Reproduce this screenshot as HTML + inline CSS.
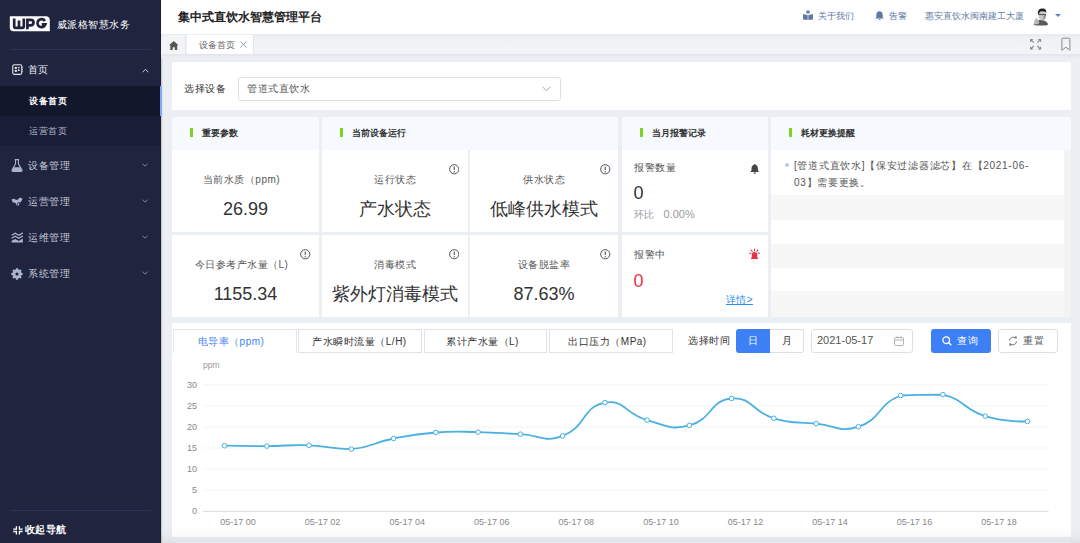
<!DOCTYPE html>
<html><head><meta charset="utf-8">
<style>
*{box-sizing:border-box;margin:0;padding:0}
html,body{width:1080px;height:543px;overflow:hidden}
body{position:relative;background:#ebeff4;font-family:"Liberation Sans",sans-serif;color:#333}
.a{position:absolute;white-space:nowrap}
#side{position:absolute;left:0;top:0;width:160px;height:543px;background:#20243f}
#side .t{position:absolute;white-space:nowrap;color:#c3c7d6;font-size:10px;line-height:12px;letter-spacing:0.5px}
#side .chev{position:absolute;left:142px;width:6px;height:6px;border-right:1px solid #8a90a8;border-bottom:1px solid #8a90a8;transform:rotate(45deg)}
#hdr{position:absolute;left:161px;top:0;width:919px;height:34px;background:#fff}
#tabs{position:absolute;left:161px;top:34px;width:919px;height:20px;background:linear-gradient(to bottom,#e8ebef,#eff1f4 25%,#f3f4f7)}
.card{position:absolute;background:#fff}
.ch{position:absolute;background:#f6f9fd}
.bar{position:absolute;width:3px;height:9px;background:#7ed321}
.ht{position:absolute;font-size:9px;line-height:10px;font-weight:bold;color:#333;white-space:nowrap}
.lbl{position:absolute;font-size:10px;line-height:11px;color:#555;white-space:nowrap;text-align:center;letter-spacing:0.5px}
.big{position:absolute;font-size:18px;line-height:20px;color:#333;white-space:nowrap;text-align:center}
.info{position:absolute;width:10.5px;height:10.5px}

</style></head><body>

<!-- SIDEBAR -->
<div id="side">
  <svg class="a" style="left:9px;top:15px" width="42" height="18" viewBox="0 0 42 18">
    <path d="M1.2 1.2 H36.8 Q40.8 1.2 40.8 5.2 V16.3 H4.5 Q0.8 16.3 0.8 12.6 V1.6 Z" fill="#fff"/>
    <g fill="none" stroke="#1f2340" stroke-width="2.7">
      <path d="M5.2 3.4 V11.3 Q5.2 12.8 6.7 12.8 H13.3 Q14.8 12.8 14.8 11.3 V3.4 M10 5.6 V12.8"/>
      <path d="M18.4 14.2 V4.8 H21.6 Q24.5 4.8 24.5 7.6 Q24.5 10.4 21.6 10.4 H18.4"/>
      <path d="M36 6 A4.05 4.05 0 1 0 36.4 9.4 H32.8"/>
    </g>
  </svg>
  <div class="t" style="left:57px;top:19px;font-size:10px;line-height:11px;color:#fff;letter-spacing:0.45px">威派格智慧水务</div>
  <div class="a" style="left:10px;top:49px;width:141px;height:1px;background:#2e3250"></div>

  <svg class="a" style="left:11.5px;top:64px" width="12" height="12" viewBox="0 0 12 12"><rect x="0.75" y="0.75" width="9" height="9.6" rx="1.6" fill="none" stroke="#e6e8ee" stroke-width="1.1"/><rect x="2.7" y="2.9" width="2.2" height="2" fill="#e6e8ee"/><rect x="2.7" y="5.9" width="2.2" height="2" fill="#e6e8ee"/><path d="M5.8 3.4h2M5.8 6.4h2M6.6 4.5v2.5" stroke="#e6e8ee" stroke-width="0.9"/><path d="M9.9 3.3h0.9M9.9 5.4h0.9M9.9 7.5h0.9" stroke="#e6e8ee" stroke-width="0.8"/></svg>
  <div class="t" style="left:28px;top:64px;font-size:10px;line-height:11px;color:#eceef3;letter-spacing:0.4px">首页</div>
  <svg class="a" style="left:141.5px;top:67.5px" width="7" height="5" viewBox="0 0 7 5"><path d="M0.6 4.3L3.5 1.2l2.9 3.1" fill="none" stroke="#c4c8d4" stroke-width="1"/></svg>

  <div class="a" style="left:0;top:86px;width:160px;height:60px;background:#1a1d36"></div>
  <div class="a" style="left:0;top:86px;width:160px;height:30px;background:#13172b"></div>
  <div class="t" style="left:29px;top:96px;font-size:9px;line-height:10px;color:#fff;font-weight:bold">设备首页</div>
  <div class="t" style="left:29px;top:126px;font-size:9px;line-height:10px;color:#b3b8c9">运营首页</div>

  <svg class="a" style="left:11px;top:159px" width="12" height="13" viewBox="0 0 12 13"><path d="M3.8 0.6h4.2M4.5 0.6v4.3L1 11q-0.4 1.4 1 1.4h8q1.4 0 1-1.4L7.4 4.9V0.6" fill="none" stroke="#a9b3cb" stroke-width="1.1"/><path d="M2.6 8.2h6.8l1.3 3.3q0 0.6-0.6 0.6H1.9q-0.6 0-0.6-0.6z" fill="#a9b3cb"/></svg>
  <div class="t" style="left:28px;top:160px;font-size:10px;line-height:11px;letter-spacing:0.5px">设备管理</div>
  <svg class="a" style="left:142px;top:163px" width="6" height="4" viewBox="0 0 6 4"><path d="M0.5 0.6L3 3.2 5.5 0.6" fill="none" stroke="#8a90a8" stroke-width="0.9"/></svg>

  <svg class="a" style="left:11px;top:196px" width="12" height="11" viewBox="0 0 12 11"><path d="M0.6 3.6Q2.5 2.2 4.3 3.4L6 4.1 9.2 1.6 11.6 2.8 10.2 5.5 8.6 7.2 7.4 10.6 5.4 9.2 4.6 7.1 1.6 6.2z" fill="#a9b3cb"/><circle cx="8.2" cy="8.5" r="1.9" fill="none" stroke="#20243f" stroke-width="0.9"/></svg>
  <div class="t" style="left:28px;top:196px;font-size:10px;line-height:11px;letter-spacing:0.5px">运营管理</div>
  <svg class="a" style="left:142px;top:199px" width="6" height="4" viewBox="0 0 6 4"><path d="M0.5 0.6L3 3.2 5.5 0.6" fill="none" stroke="#8a90a8" stroke-width="0.9"/></svg>

  <svg class="a" style="left:11px;top:232px" width="13" height="11" viewBox="0 0 13 11"><path d="M0.6 3.2L4.2 1.3 7.8 3.3 11.8 0.9M0.6 6.2L4.2 4.3 7.8 6.3 11.8 3.9" fill="none" stroke="#a9b3cb" stroke-width="1.3"/><path d="M0.6 8.8L4.2 6.9 7.8 8.9 11.8 6.5V10.6H0.6z" fill="#a9b3cb"/></svg>
  <div class="t" style="left:28px;top:232px;font-size:10px;line-height:11px;letter-spacing:0.5px">运维管理</div>
  <svg class="a" style="left:142px;top:235px" width="6" height="4" viewBox="0 0 6 4"><path d="M0.5 0.6L3 3.2 5.5 0.6" fill="none" stroke="#8a90a8" stroke-width="0.9"/></svg>

  <svg class="a" style="left:11px;top:268px" width="12" height="12" viewBox="0 0 12 12"><circle cx="6" cy="6" r="3.5" fill="none" stroke="#a9b3cb" stroke-width="2.4"/><path d="M6 0.3v11.4M0.3 6h11.4M2 2l8 8M10 2l-8 8" stroke="#a9b3cb" stroke-width="2.1"/><circle cx="6" cy="6" r="1.6" fill="#20243f"/></svg>
  <div class="t" style="left:28px;top:268px;font-size:10px;line-height:11px;letter-spacing:0.5px">系统管理</div>
  <svg class="a" style="left:142px;top:271px" width="6" height="4" viewBox="0 0 6 4"><path d="M0.5 0.6L3 3.2 5.5 0.6" fill="none" stroke="#8a90a8" stroke-width="0.9"/></svg>

  <div class="a" style="left:10px;top:510px;width:141px;height:1px;background:#2e3250"></div>
  <svg class="a" style="left:12.5px;top:526px" width="10" height="9" viewBox="0 0 10 9"><path d="M0.2 3.1H3.4V0.2M9.6 3.1H6.4V0.2M0.2 5.5H3.4V8.6M9.6 5.5H6.4V8.6" fill="none" stroke="#fff" stroke-width="1.3"/></svg>
  <div class="t" style="left:25px;top:524px;font-size:10px;line-height:11px;color:#fff;font-weight:bold;letter-spacing:0.4px">收起导航</div>
</div>
<div class="a" style="left:160px;top:0;width:1px;height:543px;background:#1b1e33"></div>
<div class="a" style="left:161px;top:0;width:2px;height:543px;background:linear-gradient(to right,rgba(0,0,0,.18),rgba(0,0,0,0))"></div>
<div class="a" style="left:160.3px;top:86px;width:1.7px;height:30px;background:#7fa9f2"></div>

<!-- HEADER -->
<div id="hdr"></div>
<div class="a" style="left:178px;top:9.5px;font-size:12px;line-height:14px;font-weight:bold;color:#222">集中式直饮水智慧管理平台</div>

<div id="tabs"></div><div class="a" style="left:161px;top:54px;width:919px;height:4px;background:linear-gradient(to bottom,#e2e6eb,#ebeff4)"></div>

<!-- header right -->
<svg class="a" style="left:803px;top:10px" width="10" height="10" viewBox="0 0 10 10"><circle cx="5" cy="2" r="1.8" fill="#5e79a6"/><path d="M0 4l5 1.2L10 4v5.5L5 10 0 9.5z" fill="#5e79a6"/><path d="M5 5.2V10" stroke="#fff" stroke-width="0.6"/></svg>
<div class="a" style="left:818px;top:10.5px;font-size:9px;line-height:10px;color:#5e79a6">关于我们</div>
<svg class="a" style="left:874.5px;top:10.5px" width="9" height="9.5" viewBox="0 0 9 9.5"><path d="M4.5 0.3q3 0 3.2 3.5V6.3L8.7 7.6H0.3L1.3 6.3V3.8Q1.5 0.3 4.5 0.3z" fill="#5e79a6"/><path d="M3.3 8.3h2.4q-0.3 1.2-1.2 1.2t-1.2-1.2z" fill="#5e79a6"/></svg>
<div class="a" style="left:888.5px;top:10.5px;font-size:9px;line-height:10px;color:#5e79a6">告警</div>
<div class="a" style="left:924.5px;top:10.5px;font-size:9px;line-height:10px;color:#5e79a6">惠安直饮水闽南建工大厦</div>
<svg class="a" style="left:1033px;top:7px" width="17" height="19" viewBox="0 0 17 19">
 <path d="M0.5 17.5Q2 14 5 13.5L8 12.5 11 13.5Q14.5 14.5 15.3 17.5L13 18.6H3z" fill="#5a5a5a"/>
 <path d="M1.5 13.5L3.5 10.5 5 13 6.5 16 4 17.5 0.8 17z" fill="#b9b9b9"/>
 <path d="M5.2 7Q5.2 3 9.3 3Q13.3 3 13 7.5L12.3 11Q11 13.6 9 13.6Q6.8 13.6 5.8 11z" fill="#c9c9c9"/>
 <path d="M11 8L13 7.5 12.3 11Q11.4 12.8 10.2 13.3z" fill="#8a8a8a"/>
 <path d="M4.8 6.6Q4.6 1.4 9.6 1.4Q14 1.6 13.2 6.2L12.6 4.8Q10.2 3.6 7 4.6L5.6 7.4z" fill="#1e1e1e"/>
 <path d="M5.6 7.6H13" stroke="#3a3a3a" stroke-width="0.9"/>
</svg>
<div class="a" style="left:1055px;top:13.5px;width:0;height:0;border-left:3.2px solid transparent;border-right:3.2px solid transparent;border-top:3.8px solid #6482bb"></div>

<!-- tab bar -->
<div class="a" style="left:163px;top:35px;width:23px;height:19px;background:#f3f4f6;border-right:1px solid #e3e6ea"></div>
<svg class="a" style="left:169px;top:40.5px" width="9.5" height="9" viewBox="0 0 9.5 9"><path d="M4.75 0L9.5 4.2H8.2V9H5.8V6.2H3.7V9H1.3V4.2H0z" fill="#555"/></svg>
<div class="a" style="left:187px;top:35px;width:67px;height:19px;background:#fff;border-right:1px solid #e3e6ea"></div>
<div class="a" style="left:199px;top:39.5px;font-size:9px;line-height:10px;color:#666">设备首页</div>
<svg class="a" style="left:240px;top:41px" width="7" height="7" viewBox="0 0 7 7"><path d="M0.5 0.5l6 6M6.5 0.5l-6 6" stroke="#8a96a8" stroke-width="0.9"/></svg>
<svg class="a" style="left:1029px;top:38px" width="13" height="13" viewBox="0 0 13 13">
 <g stroke="#8c8c8c" stroke-width="1.1" fill="none"><path d="M1.8 1.7L4.8 4.7M11.4 1.7L8.4 4.7M1.8 11L4.8 8M11.4 11L8.4 8"/></g>
 <g fill="#8c8c8c"><path d="M1.1 1.1H4.4L1.1 4.4z"/><path d="M12.1 1.1H8.8L12.1 4.4z"/><path d="M1.1 11.6H4.4L1.1 8.3z"/><path d="M12.1 11.6H8.8L12.1 8.3z"/></g>
</svg>
<svg class="a" style="left:1060px;top:37px" width="12" height="15" viewBox="0 0 12 15"><path d="M1.9 13.3V2.2Q1.9 1.2 2.9 1.2H8.9Q9.9 1.2 9.9 2.2V13.3L5.9 10.2z" fill="none" stroke="#8a8a8a" stroke-width="1"/></svg>

<!-- selector card -->
<div class="card" style="left:172px;top:62px;width:899px;height:48px"></div>
<div class="a" style="left:184px;top:83px;font-size:10px;line-height:12px;letter-spacing:0.5px;color:#333">选择设备</div>
<div class="a" style="left:238px;top:77px;width:323px;height:24px;border:1px solid #dcdfe6;border-radius:3px;background:#fff"></div>
<div class="a" style="left:247px;top:83px;font-size:10px;line-height:12px;letter-spacing:0.5px;color:#555">管道式直饮水</div>
<svg class="a" style="left:542px;top:86px" width="9" height="6" viewBox="0 0 9 6"><path d="M0.5 0.8l4 4 4-4" fill="none" stroke="#9a9ea6" stroke-width="0.9"/></svg>


<!-- CARDS -->
<div class="ch" style="left:172px;top:117px;width:147px;height:33px"></div>
<div class="ch" style="left:322px;top:117px;width:296px;height:33px"></div>
<div class="ch" style="left:622px;top:117px;width:146px;height:33px"></div>
<div class="ch" style="left:771px;top:117px;width:300px;height:33px"></div>
<div class="bar" style="left:190px;top:127.5px"></div>
<div class="bar" style="left:340px;top:127.5px"></div>
<div class="bar" style="left:640px;top:127.5px"></div>
<div class="bar" style="left:789px;top:127.5px"></div>
<div class="ht" style="left:202px;top:128px">重要参数</div>
<div class="ht" style="left:352px;top:128px">当前设备运行</div>
<div class="ht" style="left:652px;top:128px">当月报警记录</div>
<div class="ht" style="left:801px;top:128px">耗材更换提醒</div>

<div class="card" style="left:172px;top:150px;width:147px;height:82px"></div>
<div class="card" style="left:172px;top:235px;width:147px;height:82px"></div>
<div class="card" style="left:322px;top:150px;width:146px;height:82px"></div>
<div class="card" style="left:322px;top:235px;width:146px;height:82px"></div>
<div class="card" style="left:470px;top:150px;width:148px;height:82px"></div>
<div class="card" style="left:470px;top:235px;width:148px;height:82px"></div>
<div class="card" style="left:622px;top:150px;width:146px;height:82px"></div>
<div class="card" style="left:622px;top:235px;width:146px;height:82px"></div>

<div class="lbl" style="left:168px;width:147px;top:174px">当前水质（ppm)</div>
<div class="big" style="left:172px;width:147px;top:199px">26.99</div>
<div class="lbl" style="left:168px;width:147px;top:258.5px">今日参考产水量（L)</div>
<div class="big" style="left:172px;width:147px;top:284px">1155.34</div>
<div class="info" style="left:300px;top:249px"><svg width="10.5" height="10.5" viewBox="0 0 10.5 10.5" style="position:absolute;left:0;top:0"><circle cx="5.25" cy="5.25" r="4.6" fill="none" stroke="#555" stroke-width="1"/><path d="M5.25 2.5V6.1" stroke="#555" stroke-width="1.1"/><circle cx="5.25" cy="7.75" r="0.65" fill="#555"/></svg></div>

<div class="lbl" style="left:322px;width:146px;top:174px">运行状态</div>
<div class="big" style="left:322px;width:146px;top:199px">产水状态</div>
<div class="info" style="left:448.5px;top:164px"><svg width="10.5" height="10.5" viewBox="0 0 10.5 10.5" style="position:absolute;left:0;top:0"><circle cx="5.25" cy="5.25" r="4.6" fill="none" stroke="#555" stroke-width="1"/><path d="M5.25 2.5V6.1" stroke="#555" stroke-width="1.1"/><circle cx="5.25" cy="7.75" r="0.65" fill="#555"/></svg></div>
<div class="lbl" style="left:322px;width:146px;top:258.5px">消毒模式</div>
<div class="big" style="left:322px;width:146px;top:283.5px">紫外灯消毒模式</div>
<div class="info" style="left:448.5px;top:249px"><svg width="10.5" height="10.5" viewBox="0 0 10.5 10.5" style="position:absolute;left:0;top:0"><circle cx="5.25" cy="5.25" r="4.6" fill="none" stroke="#555" stroke-width="1"/><path d="M5.25 2.5V6.1" stroke="#555" stroke-width="1.1"/><circle cx="5.25" cy="7.75" r="0.65" fill="#555"/></svg></div>

<div class="lbl" style="left:470px;width:148px;top:174px">供水状态</div>
<div class="big" style="left:470px;width:148px;top:199px">低峰供水模式</div>
<div class="info" style="left:600px;top:164px"><svg width="10.5" height="10.5" viewBox="0 0 10.5 10.5" style="position:absolute;left:0;top:0"><circle cx="5.25" cy="5.25" r="4.6" fill="none" stroke="#555" stroke-width="1"/><path d="M5.25 2.5V6.1" stroke="#555" stroke-width="1.1"/><circle cx="5.25" cy="7.75" r="0.65" fill="#555"/></svg></div>
<div class="lbl" style="left:470px;width:148px;top:258.5px">设备脱盐率</div>
<div class="big" style="left:470px;width:148px;top:284px">87.63%</div>
<div class="info" style="left:600px;top:249px"><svg width="10.5" height="10.5" viewBox="0 0 10.5 10.5" style="position:absolute;left:0;top:0"><circle cx="5.25" cy="5.25" r="4.6" fill="none" stroke="#555" stroke-width="1"/><path d="M5.25 2.5V6.1" stroke="#555" stroke-width="1.1"/><circle cx="5.25" cy="7.75" r="0.65" fill="#555"/></svg></div>

<div class="a" style="left:634px;top:161.5px;font-size:10px;line-height:11px;color:#555;letter-spacing:0.5px">报警数量</div>
<svg class="a" style="left:749.5px;top:164px" width="9.5" height="10" viewBox="0 0 9.5 10"><path d="M4.75 0.8q3 0 3.2 3.6V6.6L9.2 8H0.3L1.5 6.6V4.4Q1.7 0.8 4.75 0.8z" fill="#444"/><circle cx="4.75" cy="0.8" r="0.8" fill="#444"/><path d="M3.5 8.6h2.5q-0.3 1.3-1.25 1.3T3.5 8.6z" fill="#444"/></svg>
<div class="a" style="left:633.5px;top:183px;font-size:18px;line-height:20px;color:#333">0</div>
<div class="a" style="left:634px;top:208.5px;font-size:10px;line-height:11px;color:#999">环比</div><div class="a" style="left:663.5px;top:208px;font-size:11px;line-height:12px;color:#999">0.00%</div>

<div class="a" style="left:634px;top:248.5px;font-size:10px;line-height:11px;color:#555;letter-spacing:0.5px">报警中</div>
<svg class="a" style="left:744px;top:244px" width="20" height="20" viewBox="0 0 20 20"><path d="M7.8 13.9V10.7Q7.8 7.9 10.5 7.9T13.2 10.7V13.9z" fill="#e8334a"/><rect x="7" y="13.4" width="7" height="1.6" rx="0.4" fill="#e8334a"/><path d="M10.5 5V6.8M7.2 6.1L8.2 7.4M13.8 6.1L12.8 7.4M5.5 9.2H7M14 9.2H15.5" stroke="#e8334a" stroke-width="1.1" stroke-linecap="round"/></svg>
<div class="a" style="left:633.5px;top:271px;font-size:18px;line-height:20px;color:#e8334a">0</div>
<div class="a" style="left:726px;top:294px;font-size:10px;line-height:11px;color:#2d8cf0;text-decoration:underline;letter-spacing:0.4px">详情&gt;</div>

<!-- consumables list -->
<div class="a" style="left:771px;top:150px;width:293px;height:167px;background:#fff"></div>
<div class="a" style="left:771px;top:195px;width:293px;height:24.5px;background:#f7f7f8"></div>
<div class="a" style="left:771px;top:243.5px;width:293px;height:24px;background:#f7f7f8"></div>
<div class="a" style="left:771px;top:291px;width:293px;height:26px;background:#f7f7f8"></div>
<div class="a" style="left:1064px;top:150px;width:7px;height:167px;background:#f3f3f4"></div>
<div class="a" style="left:784.5px;top:162.5px;width:4.5px;height:4.5px;border-radius:50%;background:#b3cdf3"></div>
<div class="a" style="left:794px;top:156.5px;font-size:10px;line-height:17px;color:#555;letter-spacing:0.72px">[管道式直饮水]【保安过滤器滤芯】在【2021-06-<br>03】需要更换。</div>


<!-- CHART CARD -->
<div class="card" style="left:172px;top:323px;width:899px;height:214px"></div>
<div class="a" style="left:173px;top:329px;width:124px;height:24px;background:#fff;border:1px solid #e4e7ed;border-bottom:none"></div>
<div class="a" style="left:298px;top:329px;width:124px;height:24px;border:1px solid #dfe2e8"></div>
<div class="a" style="left:424px;top:329px;width:123px;height:24px;border:1px solid #dfe2e8"></div>
<div class="a" style="left:549px;top:329px;width:124px;height:24px;border:1px solid #dfe2e8"></div>
<div class="a" style="left:169px;top:335.5px;width:124px;text-align:center;font-size:10px;line-height:12px;letter-spacing:0.5px;color:#3d7ff5">电导率（ppm)</div>
<div class="a" style="left:297px;top:335.5px;width:125px;text-align:center;font-size:10px;line-height:12px;letter-spacing:0.5px;color:#333">产水瞬时流量（L/H)</div>
<div class="a" style="left:420px;top:335.5px;width:125px;text-align:center;font-size:10px;line-height:12px;letter-spacing:0.5px;color:#333">累计产水量（L)</div>
<div class="a" style="left:545.5px;top:335.5px;width:124px;text-align:center;font-size:10px;line-height:12px;letter-spacing:0.5px;color:#333">出口压力（MPa)</div>

<div class="a" style="left:688px;top:335px;font-size:10px;line-height:12px;letter-spacing:0.5px;color:#333">选择时间</div>
<div class="a" style="left:736px;top:329px;width:34px;height:23.5px;background:#3d7ff5;border-radius:3px 0 0 3px"></div>
<div class="a" style="left:770px;top:329px;width:34px;height:23.5px;border:1px solid #dcdfe6;border-left:none;border-radius:0 3px 3px 0"></div>
<div class="a" style="left:736px;top:335px;width:34px;text-align:center;font-size:10px;line-height:12px;letter-spacing:0.5px;color:#fff">日</div>
<div class="a" style="left:770px;top:335px;width:34px;text-align:center;font-size:10px;line-height:12px;letter-spacing:0.5px;color:#333">月</div>
<div class="a" style="left:810.5px;top:329px;width:102px;height:23.5px;border:1px solid #dcdfe6;border-radius:3px"></div>
<div class="a" style="left:817px;top:334px;font-size:11px;line-height:12px;color:#555">2021-05-17</div>
<svg class="a" style="left:893.5px;top:336px" width="10" height="10" viewBox="0 0 10 10"><rect x="0.5" y="1.5" width="9" height="8" rx="1" fill="none" stroke="#aaa" stroke-width="0.9"/><path d="M0.5 4h9M3 0.3v2M7 0.3v2" stroke="#aaa" stroke-width="0.9"/></svg>
<div class="a" style="left:931px;top:329px;width:60px;height:23.5px;background:#3d7ff5;border-radius:3px"></div>
<svg class="a" style="left:941.5px;top:336px" width="10" height="10" viewBox="0 0 10 10"><circle cx="4.2" cy="4.2" r="3.3" fill="none" stroke="#fff" stroke-width="1.3"/><path d="M6.6 6.6L9.3 9.3" stroke="#fff" stroke-width="1.4"/></svg>
<div class="a" style="left:957px;top:335px;font-size:10px;line-height:12px;letter-spacing:0.5px;color:#fff">查询</div>
<div class="a" style="left:997.5px;top:329px;width:60px;height:23.5px;border:1px solid #dcdfe6;border-radius:3px;background:#fff"></div>
<svg class="a" style="left:1007.5px;top:335px" width="10" height="12" viewBox="0 0 10 12"><path d="M7.6 3.2A3.7 3.7 0 0 0 1.4 5.6M2.4 8.8A3.7 3.7 0 0 0 8.6 6.4" fill="none" stroke="#777" stroke-width="1"/><path d="M6.2 1.4L8.9 1.6 8.3 4.3z" fill="#777"/><path d="M3.8 10.6L1.1 10.4 1.7 7.7z" fill="#777"/></svg>
<div class="a" style="left:1023px;top:335px;font-size:10px;line-height:12px;letter-spacing:0.5px;color:#555">重置</div>

<svg class="a" style="left:0;top:0" width="1080" height="543">
 <text x="203" y="367.5" font-family="Liberation Sans" font-size="8.5" fill="#999">ppm</text>
 <g stroke="#f3f4f5" stroke-width="1"><line x1="203.4" y1="384.8" x2="1048.6" y2="384.8"/><line x1="203.4" y1="405.9" x2="1048.6" y2="405.9"/><line x1="203.4" y1="427.0" x2="1048.6" y2="427.0"/><line x1="203.4" y1="448.0" x2="1048.6" y2="448.0"/><line x1="203.4" y1="469.1" x2="1048.6" y2="469.1"/><line x1="203.4" y1="490.2" x2="1048.6" y2="490.2"/></g>
 <line x1="203.4" y1="511.3" x2="1048.6" y2="511.3" stroke="#d9d9d9" stroke-width="1"/>
 <g font-family="Liberation Sans" font-size="9" fill="#888" text-anchor="end"><text x="197" y="388.2">30</text><text x="197" y="409.2">25</text><text x="197" y="430.2">20</text><text x="197" y="451.2">15</text><text x="197" y="472.2">10</text><text x="197" y="493.2">5</text><text x="197" y="514.2">0</text></g>
 <g font-family="Liberation Sans" font-size="9" fill="#888" text-anchor="middle"><text x="238.1" y="524.5">05-17 00</text><text x="322.6" y="524.5">05-17 02</text><text x="407.2" y="524.5">05-17 04</text><text x="491.8" y="524.5">05-17 06</text><text x="576.3" y="524.5">05-17 08</text><text x="660.9" y="524.5">05-17 10</text><text x="745.4" y="524.5">05-17 12</text><text x="830.0" y="524.5">05-17 14</text><text x="914.5" y="524.5">05-17 16</text><text x="999.0" y="524.5">05-17 18</text></g>
 <path d="M224.5 445.7 C224.5 445.7 245.7 446.2 266.8 446.1 C287.9 446.0 288.0 444.6 309.1 445.3 C330.2 446.1 330.5 449.1 351.3 449.1 C372.7 447.4 372.2 442.7 393.6 438.5 C414.5 434.4 414.6 434.1 435.8 432.5 C456.9 430.9 457.0 431.7 478.1 432.1 C499.2 432.5 499.2 433.2 520.4 434.2 C541.5 435.1 544.0 442.9 562.6 435.9 C586.3 427.1 582.0 406.9 604.9 402.6 C624.3 399.0 625.2 414.2 647.1 420.1 C667.5 425.6 670.0 430.4 689.4 425.4 C712.2 419.6 709.8 400.3 731.6 398.5 C752.0 396.8 751.8 411.7 773.9 418.3 C794.1 424.3 795.0 421.5 816.2 423.6 C837.2 425.7 839.6 433.0 858.4 426.7 C881.8 418.9 877.3 404.4 900.7 395.5 C919.5 394.6 923.0 394.6 942.9 394.6 C965.3 400.0 962.9 409.0 985.2 416.1 C1005.2 422.4 1027.5 421.4 1027.5 421.4" fill="none" stroke="#4ab0e2" stroke-width="1.8"/>
 <g fill="#fff" stroke="#4ab0e2" stroke-width="1"><circle cx="224.5" cy="445.7" r="2.3"/><circle cx="266.8" cy="446.1" r="2.3"/><circle cx="309.1" cy="445.3" r="2.3"/><circle cx="351.3" cy="449.1" r="2.3"/><circle cx="393.6" cy="438.5" r="2.3"/><circle cx="435.8" cy="432.5" r="2.3"/><circle cx="478.1" cy="432.1" r="2.3"/><circle cx="520.4" cy="434.2" r="2.3"/><circle cx="562.6" cy="435.9" r="2.3"/><circle cx="604.9" cy="402.6" r="2.3"/><circle cx="647.1" cy="420.1" r="2.3"/><circle cx="689.4" cy="425.4" r="2.3"/><circle cx="731.6" cy="398.5" r="2.3"/><circle cx="773.9" cy="418.3" r="2.3"/><circle cx="816.2" cy="423.6" r="2.3"/><circle cx="858.4" cy="426.7" r="2.3"/><circle cx="900.7" cy="395.5" r="2.3"/><circle cx="942.9" cy="394.6" r="2.3"/><circle cx="985.2" cy="416.1" r="2.3"/><circle cx="1027.5" cy="421.4" r="2.3"/></g>
</svg>
<div class="a" style="left:161px;top:527px;width:919px;height:16px;background:linear-gradient(to bottom,rgba(0,0,0,0),rgba(0,0,0,.025) 60%,rgba(0,0,0,.06))"></div><div class="a" style="left:172px;top:537px;width:899px;height:6px;background:#e3e6ea"></div>

</body></html>
